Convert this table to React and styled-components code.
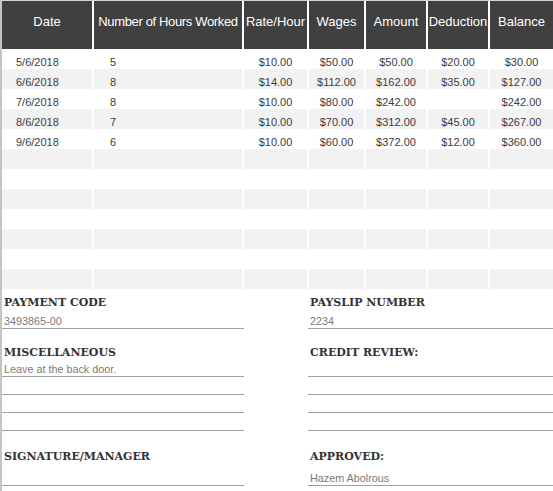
import React from "react";
import styled, { createGlobalStyle } from "styled-components";

const GlobalStyle = createGlobalStyle`
    html, body {
        margin: 0;
        padding: 0;
        background: #ffffff;
    }
`;

const columns = "90px 148px 63px 55px 60px 60px 63px";

const headers = ["Date", "Number of Hours Worked", "Rate/Hour", "Wages", "Amount", "Deduction", "Balance"];

const entries = [
    ["5/6/2018", "5", "$10.00", "$50.00", "$50.00", "$20.00", "$30.00"],
    ["6/6/2018", "8", "$14.00", "$112.00", "$162.00", "$35.00", "$127.00"],
    ["7/6/2018", "8", "$10.00", "$80.00", "$242.00", "", "$242.00"],
    ["8/6/2018", "7", "$10.00", "$70.00", "$312.00", "$45.00", "$267.00"],
    ["9/6/2018", "6", "$10.00", "$60.00", "$372.00", "$12.00", "$360.00"],
];

// pad out to 12 rows like the sheet
const rows = [...entries];
while (rows.length < 12) {
    rows.push(["", "", "", "", "", "", ""]);
}

const App = () => {
    return (
        <>
            <GlobalStyle />
            <Sheet>
                <Marker />
                <HeaderRow>
                    {headers.map(title => (
                        <HeaderCell key={title} $tight={title.length > 12}>{title}</HeaderCell>
                    ))}
                </HeaderRow>
                {rows.map((row, i) => (
                    <Row key={i}>
                        {row.map((value, j) => (
                            <Cell key={j} $shaded={i % 2 === 1} $indent={j === 0 ? 14 : j === 1 ? 16 : 0}>
                                {value}
                            </Cell>
                        ))}
                    </Row>
                ))}
                <Form>
                    <Field $top={6} $gap={3}>
                        <Label>PAYMENT CODE</Label>
                        <Value>3493865-00</Value>
                    </Field>
                    <Field $top={6} $gap={3}>
                        <Label>PAYSLIP NUMBER</Label>
                        <Value>2234</Value>
                    </Field>
                    <Field $top={16} $gap={1}>
                        <Label>MISCELLANEOUS</Label>
                        <Value>Leave at the back door.</Value>
                        <Blank />
                        <Blank />
                        <Blank />
                    </Field>
                    <Field $top={16} $gap={1}>
                        <Label>CREDIT REVIEW:</Label>
                        <Value />
                        <Blank />
                        <Blank />
                        <Blank />
                    </Field>
                    <Field $top={18} $gap={6}>
                        <Label>SIGNATURE/MANAGER</Label>
                        <Value />
                    </Field>
                    <Field $top={18} $gap={6}>
                        <Label>APPROVED:</Label>
                        <Value>Hazem Abolrous</Value>
                    </Field>
                </Form>
            </Sheet>
        </>
    );
};

export default App;

const Sheet = styled.div`
    position: relative;
    width: 553px;
    height: 491px;
    box-sizing: border-box;
    border-top: 1px solid #d4d4d4;
    border-left: 2px solid #c4c4c4;
    overflow: hidden;
    font-family: "Liberation Sans", Arial, sans-serif;
`;

const Marker = styled.span`
    position: absolute;
    left: -2px;
    top: 208px;
    width: 2px;
    height: 20px;
    background: #f0b54a;
`;

const HeaderRow = styled.div`
    display: grid;
    grid-template-columns: ${columns};
    column-gap: 2px;
    height: 48px;
`;

const HeaderCell = styled.div`
    display: flex;
    align-items: center;
    justify-content: center;
    padding-bottom: 7px;
    box-sizing: border-box;
    background: #404040;
    color: #ffffff;
    font-size: 13px;
    letter-spacing: ${props => (props.$tight ? "-0.35px" : "0")};
    white-space: nowrap;
`;

const Row = styled.div`
    display: grid;
    grid-template-columns: ${columns};
    column-gap: 2px;
    height: 20px;
`;

const Cell = styled.div`
    display: flex;
    align-items: flex-end;
    justify-content: ${props => (props.$indent ? "flex-start" : "center")};
    padding-left: ${props => props.$indent}px;
    background: ${props => (props.$shaded ? "#f2f2f2" : "#ffffff")};
    color: #3c3c3c;
    font-size: 11px;
    line-height: 13px;
    white-space: nowrap;
`;

const Form = styled.div`
    display: grid;
    grid-template-columns: 242px 245px;
    column-gap: 64px;
`;

const Field = styled.div`
    display: flex;
    flex-direction: column;
    padding-top: ${props => props.$top}px;

    & > div:nth-child(2) {
        margin-top: ${props => props.$gap}px;
    }
`;

const Label = styled.div`
    height: 16px;
    line-height: 16px;
    padding-left: 2px;
    font-family: "DejaVu Serif", "Liberation Serif", serif;
    font-weight: bold;
    font-size: 11px;
    color: #333333;
    white-space: nowrap;
`;

const Value = styled.div`
    height: 15px;
    box-sizing: border-box;
    line-height: 14px;
    padding-left: 2px;
    border-bottom: 1px solid #a0a0a0;
    font-size: 10.8px;
    color: #7a7a7a;
`;

const Blank = styled.div`
    height: 18px;
    box-sizing: border-box;
    border-bottom: 1px solid #a0a0a0;
`;
